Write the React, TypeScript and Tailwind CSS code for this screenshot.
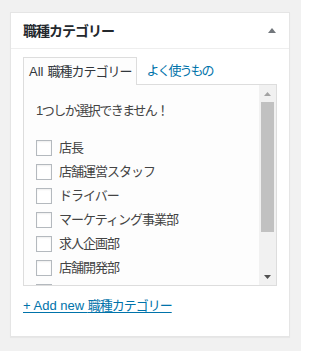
import * as React from 'react'

const ITEMS = ['店長', '店舗運営スタッフ', 'ドライバー', 'マーケティング事業部', '求人企画部', '店舗開発部', '']

const Checkbox: React.FC = () => (
	<span className="block w-4 h-4 shrink-0 border border-[#b4b9be] bg-white shadow-[inset_0_1px_2px_rgba(0,0,0,0.07)]" />
)

const App: React.FC = () => {
	return (
		<div className="w-[301px] min-h-[351px] bg-[#f1f1f1] pl-[10px] pt-[12px] font-['Liberation_Sans','Noto_Sans_CJK_JP',sans-serif]">
			<div className="w-[280px] h-[325px] border border-[#e5e5e5] bg-white shadow-[0_1px_1px_rgba(0,0,0,0.04)] flex flex-col">
				<div className="h-[36px] border-b border-[#eeeeee] flex items-center justify-between pl-3 pr-[13px]">
					<h2 className="text-[14px] font-semibold tracking-[-1px] text-[#23282d] leading-5">
						職種カテゴリー
					</h2>
					<svg width="8" height="5" viewBox="0 0 8 5">
						<path d="M0 5 L4 0 L8 5 Z" fill="#72777c" />
					</svg>
				</div>
				<div className="px-3 pt-2">
					<div className="flex items-end h-[27px]">
						<div className="relative z-10 -mb-px h-[28px] border border-b-0 border-[#dddddd] bg-[#fdfdfd] px-[5px] flex items-center text-[13px] text-[#32373c]">
							<span>All</span>
							<span className="ml-[4px] tracking-[-1px]">職種カテゴリー</span>
						</div>
						<div className="h-[27px] pl-[9px] flex items-center text-[13px] tracking-[-2px] text-[#0073aa]">
							よく使うもの
						</div>
					</div>
					<div className="h-[202px] border border-[#dddddd] bg-[#fdfdfd] flex">
						<div className="flex-1 overflow-hidden pl-3 pt-[14px] text-[13px] text-[#444444]">
							<p className="leading-6 tracking-[-1.5px]">1つしか選択できません！</p>
							<ul className="mt-[13px]">
								{ITEMS.map((item, i) => (
									<li key={i} className="h-6 flex items-center gap-[7px]">
										<Checkbox />
										{item ? <span className="tracking-[-1px]">{item}</span> : null}
									</li>
								))}
							</ul>
						</div>
						<div className="w-[17px] bg-[#f1f1f1] flex flex-col">
							<div className="h-[17px] flex items-center justify-center">
								<svg width="7" height="4" viewBox="0 0 7 4">
									<path d="M0 4 L3.5 0 L7 4 Z" fill="#a3a3a3" />
								</svg>
							</div>
							<div className="mx-[2px] h-[130px] bg-[#c1c1c1]" />
							<div className="flex-1" />
							<div className="h-[17px] flex items-center justify-center">
								<svg width="7" height="4" viewBox="0 0 7 4">
									<path d="M0 0 L7 0 L3.5 4 Z" fill="#505050" />
								</svg>
							</div>
						</div>
					</div>
					<a
						href="#"
						className="inline-block mt-[10px] text-[13px] leading-[19px] text-[#0073aa] underline underline-offset-2"
					>
						+ Add new <span className="tracking-[-1px]">職種カテゴリー</span>
					</a>
				</div>
			</div>
		</div>
	)
}

export default App
